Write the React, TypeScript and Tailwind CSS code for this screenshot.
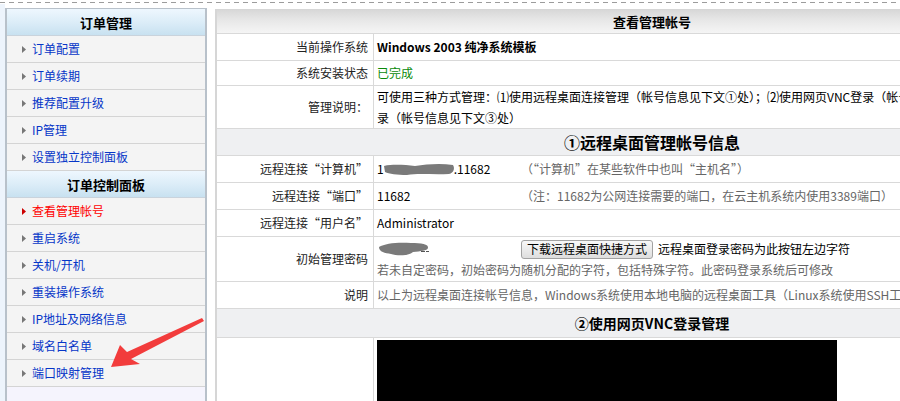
import React from "react";

const Bullet = ({ color = "#777" }: { color?: string }) => (
  <svg width="4" height="7" viewBox="0 0 4 7" className="shrink-0">
    <polygon points="0,0 4,3.5 0,7" fill={color} />
  </svg>
);

const SideHeader = ({ text }: { text: string }) => (
  <div className="h-[27px] flex items-center justify-center border-b border-[#c9d3dc] bg-[linear-gradient(180deg,#eef7fe_0%,#dcedf8_50%,#c8e1f0_100%)] text-[13px] font-bold text-black">
    {text}
  </div>
);

const SideItem = ({ text, active }: { text: string; active?: boolean }) => (
  <div className="h-[27px] flex items-center border-b border-[#d4d4d4] bg-[#f4f4f4] pl-[15px]">
    <Bullet color={active ? "#c00" : "#777"} />
    <span className={"ml-[6px] text-[12px] " + (active ? "text-[#ff0000]" : "text-[#0636c8]")}>{text}</span>
  </div>
);

const Row = ({
  h,
  label,
  children,
}: {
  h: string;
  label: React.ReactNode;
  children?: React.ReactNode;
}) => (
  <div className={"flex border-b border-[#d9d9d9] bg-white " + h}>
    <div className="w-[157px] shrink-0 border-r border-[#d9d9d9] flex items-center justify-end pr-[5px] text-[#222]">
      {label}
    </div>
    <div className="flex-1 min-w-0 pl-[3px] flex flex-col justify-center overflow-hidden">{children}</div>
  </div>
);

const Section = ({ h, text, size }: { h: string; text: string; size: string }) => (
  <div className={"flex items-center justify-center border-b border-[#d9d9d9] bg-[#eff0f2] font-bold text-black " + h + " " + size}>
    {text}
  </div>
);

export default function App() {
  return (
    <div className="relative w-[900px] h-[401px] overflow-hidden bg-white font-['Noto_Sans_CJK_SC','Noto_Sans',sans-serif] text-[12px] leading-none">
      <div className="h-[4px] pt-[2px]">
        <div className="h-px bg-[repeating-linear-gradient(90deg,#9c9c9c_0_5px,transparent_5px_9px)]" />
      </div>
      <div className="flex">
        <div className="w-[5px] h-[397px] bg-[#edf4fc] shrink-0" />
        {/* sidebar */}
        <div className="w-[202px] shrink-0 h-[397px] flex flex-col pt-[4px]">
          <div className="flex-1 flex flex-col border-x-2 border-t border-[#b8c1ca] bg-[#f5f4fd]">
            <SideHeader text="订单管理" />
            <SideItem text="订单配置" />
            <SideItem text="订单续期" />
            <SideItem text="推荐配置升级" />
            <SideItem text="IP管理" />
            <SideItem text="设置独立控制面板" />
            <SideHeader text="订单控制面板" />
            <SideItem text="查看管理帐号" active />
            <SideItem text="重启系统" />
            <SideItem text="关机/开机" />
            <SideItem text="重装操作系统" />
            <SideItem text="IP地址及网络信息" />
            <SideItem text="域名白名单" />
            <SideItem text="端口映射管理" />
          </div>
        </div>
        <div className="w-[8px] shrink-0" />
        {/* main */}
        <div className="w-[872px] shrink-0 pt-[5px]">
          <div className="border-l-2 border-t border-[#d6d6d6]">
            <div className="h-[24px] flex items-center justify-center border-b border-[#d9d9d9] bg-[linear-gradient(180deg,#d8d8d8_0%,#e6e6e6_40%,#f5f5f5_100%)] text-[13px] font-bold text-black">
              查看管理帐号
            </div>
            <Row h="h-[27px]" label="当前操作系统">
              <div className="font-bold text-black whitespace-nowrap">Windows 2003 纯净系统模板</div>
            </Row>
            <Row h="h-[25px]" label="系统安装状态">
              <div className="text-[#0a8a0a]">已完成</div>
            </Row>
            <Row h="h-[43px]" label="管理说明：">
              <div className="whitespace-nowrap text-black leading-[21px]">
                可使用三种方式管理：⑴使用远程桌面连接管理（帐号信息见下文①处）；⑵使用网页VNC登录（帐号信息见下文②处）；⑶使用云主机控制面板登
              </div>
              <div className="whitespace-nowrap text-black leading-[21px]">录（帐号信息见下文③处）</div>
            </Row>
            <Section h="h-[27px]" text="①远程桌面管理帐号信息" size="text-[16px]" />
            <Row h="h-[27px]" label="远程连接“计算机”">
              <div className="flex items-center whitespace-nowrap">
                <div className="w-[144px] flex items-center text-black">
                  <span>1</span>
                  <svg width="72" height="14" viewBox="0 0 72 14" className="-mx-[1px]">
                    <path d="M1,4 C10,2 22,3 32,4 C44,2 58,1 70,3 C72,6 71,11 66,12 C50,13 36,11 24,13 C14,13 6,12 2,10 Z" fill="#7a7a7a" />
                  </svg>
                  <span>.11682</span>
                </div>
                <span className="text-[#666]">（“计算机”在某些软件中也叫“主机名”）</span>
              </div>
            </Row>
            <Row h="h-[27px]" label="远程连接“端口”">
              <div className="flex items-center whitespace-nowrap">
                <div className="w-[144px] text-black">11682</div>
                <span className="text-[#666]">（注：11682为公网连接需要的端口，在云主机系统内使用3389端口）</span>
              </div>
            </Row>
            <Row h="h-[27px]" label="远程连接“用户名”">
              <div className="text-black">Administrator</div>
            </Row>
            <Row h="h-[45px]" label="初始管理密码">
              <div className="flex items-center whitespace-nowrap h-[21px]">
                <div className="w-[144px] flex items-center">
                  <svg width="54" height="16" viewBox="0 0 54 16">
                    <path d="M2,6 C8,2 22,1 34,2 C44,2 52,3 51,7 C50,10 44,10 36,11 C32,15 20,15 14,13 C8,12 2,11 2,6 Z" fill="#7a7a7a" />
                    <rect x="44" y="10" width="4" height="1" fill="#555" />
                    <rect x="49" y="10" width="3" height="1" fill="#555" />
                  </svg>
                </div>
                <div className="h-[19px] px-[5px] flex items-center border border-[#a2a2a2] rounded-[3px] bg-[linear-gradient(180deg,#f8f8f8,#dedede)] text-black">
                  下载远程桌面快捷方式
                </div>
                <span className="ml-[5px] text-black">远程桌面登录密码为此按钮左边字符</span>
              </div>
              <div className="whitespace-nowrap text-[#666] leading-[20px]">
                若未自定密码，初始密码为随机分配的字符，包括特殊字符。此密码登录系统后可修改
              </div>
            </Row>
            <Row h="h-[27px]" label="说明">
              <div className="whitespace-nowrap text-[#666]">
                以上为远程桌面连接帐号信息，Windows系统使用本地电脑的远程桌面工具（Linux系统使用SSH工具）
              </div>
            </Row>
            <Section h="h-[29px]" text="②使用网页VNC登录管理" size="text-[14px]" />
            <div className="flex h-[80px] bg-white">
              <div className="w-[157px] shrink-0 border-r border-[#d9d9d9]" />
              <div className="pl-[3px] pt-[2px]">
                <div className="w-[460px] h-[80px] bg-black" />
              </div>
            </div>
          </div>
        </div>
      </div>
      <svg className="absolute left-0 top-0 pointer-events-none" width="900" height="401" viewBox="0 0 900 401">
        <polygon
          points="111,367 120,345 127,352 202,318 204,321 131,359 140,364"
          fill="#f23c3c"
        />
      </svg>
    </div>
  );
}
